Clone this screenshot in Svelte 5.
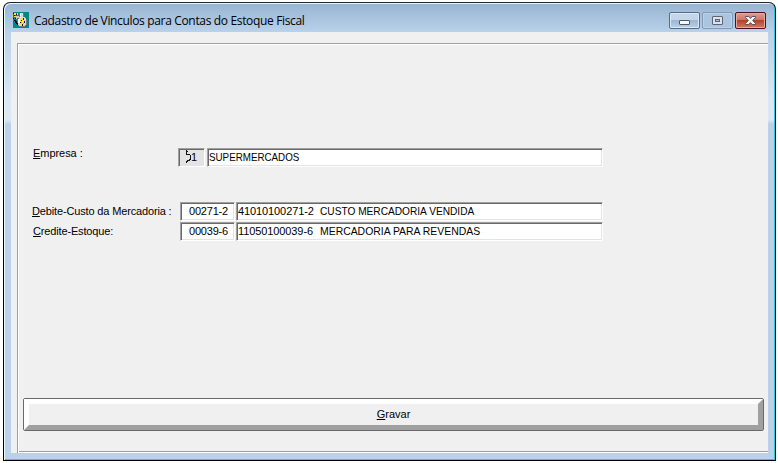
<script>
  const entries = [
    { key: 'D', label: 'ebite-Custo da Mercadoria :', code: '00271-2', account: '41010100271-2', name: 'CUSTO MERCADORIA VENDIDA', cls: 'debit' },
    { key: 'C', label: 'redite-Estoque:', code: '00039-6', account: '11050100039-6', name: 'MERCADORIA PARA REVENDAS', cls: 'credit' }
  ];
</script>

<div class="page">
  <div class="window">
    <header>
      <svg class="app-icon" width="16" height="16" viewBox="0 0 16 16" shape-rendering="crispEdges">
        <path fill="#078486" d="M0 0h16v16H0z" />
        <path fill="#777" d="M6 1h5v4H6zM5 5h7v1h1v1h1v6h-1v1h-1v1H6v-1H5v-1H4V7h1z" />
        <path fill="#d8d8d8" d="M7 1h3v4H7zM6 5h6v1h1v7h-1v1H6v-1H5V7h1z" />
        <path fill="#fff" d="M7 1h1v3H7zM5 7h2v4H5zM7 5h1v1H7z" />
        <path fill="#ffe52b" d="M1 1h2v2H1zM4 1h1v2H4zM1 4h2v1H1zM8 6h2v2H8zM7 8h2v2H7zM9 8h2v4H9zM7 11h2v2H7z" />
        <path fill="#111" d="M0 1h1v1H0zM3 2h1v1H3zM1 3h1v1H1zM0 6h1v1H0zM2 6h2v1H2zM1 8h2v1h1v2h1v2H4v-1H3v-1H2V9H1zM10 6h1v2h-1zM8 8h1v1H8zM11 9h1v2h-1zM7 10h1v1H7zM9 12h1v2H9z" />
        <path fill="#d0ceb8" d="M3 4h3v2H4v1H3z" />
        <path fill="#f79716" d="M8 10h1v1H8zM10 11h1v1h-1z" />
      </svg>
      <h1>Cadastro de Vinculos para Contas do Estoque Fiscal</h1>
      <div class="controls">
        <button class="min" aria-label="Minimizar">
          <svg width="31" height="17" viewBox="0 0 31 17"><rect x="10.5" y="8.5" width="10" height="4" rx=".5" fill="#f8f8f8" stroke="#535666" /></svg>
        </button>
        <button class="max" aria-label="Maximizar">
          <svg width="31" height="17" viewBox="0 0 31 17"><rect x="10.5" y="4.5" width="10" height="8" rx=".5" fill="#dce3ea" stroke="#5c6478" /><rect x="13.5" y="7.5" width="4" height="2" fill="#a5bfdd" stroke="#5c6478" /></svg>
        </button>
        <button class="close" aria-label="Fechar">
          <svg width="31" height="17" viewBox="0 0 31 17"><path d="M10.5 4.5h3.3l1.7 1.9 1.7-1.9h3.3v1l-2.8 3 2.8 3v1h-3.3l-1.7-1.9-1.7 1.9h-3.3v-1l2.8-3-2.8-3z" fill="#f5f5f5" stroke="#565260" /></svg>
        </button>
      </div>
    </header>
    <main>
      <section class="panel">
        <div class="row company">
          <span class="label"><u>E</u>mpresa :</span>
          <span class="field id"><svg width="6" height="14" viewBox="0 0 6 14" shape-rendering="crispEdges"><path d="M0 0h1v1h1v1H1v2h3v1h1v5H4v1H2v1H1v1H0v-2h1v-1h2V9h1V5H0z" fill="#111" /></svg><span>1</span></span>
          <span class="field company-name"><span class="name">SUPERMERCADOS</span></span>
        </div>
        {#each entries as entry}
          <div class="row {entry.cls}">
            <span class="label"><u>{entry.key}</u>{entry.label}</span>
            <span class="field code">{entry.code}</span>
            <span class="field account"><span class="number">{entry.account}</span><span class="name">{entry.name}</span></span>
          </div>
        {/each}
        <button class="save"><span><u>G</u>ravar</span></button>
      </section>
    </main>
  </div>
</div>

<style>
  :global(body) { background: #fff; }
  * { box-sizing: border-box; }
  button { padding: 0; margin: 0; }
  .page { width: 778px; height: 463px; padding: 2px 2px 2px 3px; background: #fff; overflow: hidden; }
  .window {
    width: 773px; height: 459px; padding: 0 6px 6px; display: flex; flex-direction: column;
    border: 1px solid #000; border-top-color: #20282d; border-radius: 7px 7px 0 0;
    background: linear-gradient(#98b4d2 0, #b9d1ea 29px, #d9e6f4 92px, #dce8f5 117px, #b9d1ea 121px);
    box-shadow: inset 1px 1px #e8f7fc, inset -1px -1px #35c5da;
  }
  header { height: 28px; flex: none; display: flex; align-items: flex-start; padding-left: 3px; margin-top: 1px; }
  .app-icon { margin-top: 8px; flex: none; }
  h1 { margin: 8px 0 0 5px; font: 12px/17px "Open Sans", "Noto Sans", sans-serif; color: #000; white-space: nowrap; letter-spacing: -.34px; }
  .controls { margin-left: auto; padding: 8px 3px 0 0; display: flex; gap: 2px; }
  .controls button { width: 31px; height: 17px; border: 1px solid #566b8a; border-radius: 2px; box-shadow: inset 0 0 0 1px #dce8f4; background: linear-gradient(#c4d6e9 0 45%, #9bb5d1 46%, #b9d1e9); }
  .controls svg { display: block; margin: -1px; }
  .controls .max { border-color: #8198b8; background: #acc5df; box-shadow: inset 0 0 0 1px #bdd1e7; }
  .controls .close { border-color: #48131d; background: linear-gradient(#dba094 0, #cf7565 45%, #b63b27 46%, #d57a5d); box-shadow: inset 0 0 0 1px #e7aa9e; }
  main { height: 421px; width: 757px; margin-left: 1px; background: #f0f0f0; padding: 11px 0 0 6px; flex: none; }
  .panel { height: 410px; border: 1px solid #a0a0a0; border-right: 0; border-bottom: 0; box-shadow: inset 1px 1px #fff, inset 0 -1px #fff, inset 0 -2px #a0a0a0; padding: 104px 0 0 5px; font: 11px/15px "Liberation Sans", Arial, sans-serif; color: #000; }
  .row { display: flex; height: 19px; white-space: nowrap; }
  .label { width: 157px; flex: none; padding: 2px 0 0 9px; letter-spacing: -.15px; }
  u { text-underline-offset: 1px; text-decoration-thickness: 1px; }
  .field { height: 19px; background: #fff; border: 1px solid; border-color: #a0a0a0 #fff #fff #a0a0a0; box-shadow: inset 1px 1px #696969, inset -1px -1px #e3e3e3; padding: 1px 0 0 1px; white-space: pre; }
  .company { margin-bottom: 35px; }
  .company .label { width: 155px; padding: 0 0 0 10px; line-height: 11px; letter-spacing: -.05px; }
  .id { width: 27px; margin-right: 2px; background: #e3e3e3; display: flex; padding-left: 7px; }
  .id span { margin-left: -1px; }
  .company-name { width: 396px; }
  .debit { margin-bottom: 1px; }
  .credit .label { padding-left: 10px; }
  .code { width: 55px; margin-right: 1px; padding-left: 8px; letter-spacing: -.2px; }
  .account { width: 367px; display: flex; padding-left: 1px; }
  .number { width: 82px; letter-spacing: -.1px; }
  .name { display: inline-block; transform-origin: left; transform: scaleX(.89); }
  .debit .name { transform: scaleX(.922); }
  .credit .name { transform: scaleX(.947); }
  .save { margin-top: 157px; width: 741px; height: 33px; display: block; border: 1px solid #696969; border-radius: 2px; background: #696969; font: inherit; color: #000; }
  .save span { width: 739px; height: 31px; border: 5px solid; border-color: #fff #a0a0a0 #a0a0a0 #fff; background: #f0f0f0; display: block; line-height: 21px; text-align: center; }
</style>
